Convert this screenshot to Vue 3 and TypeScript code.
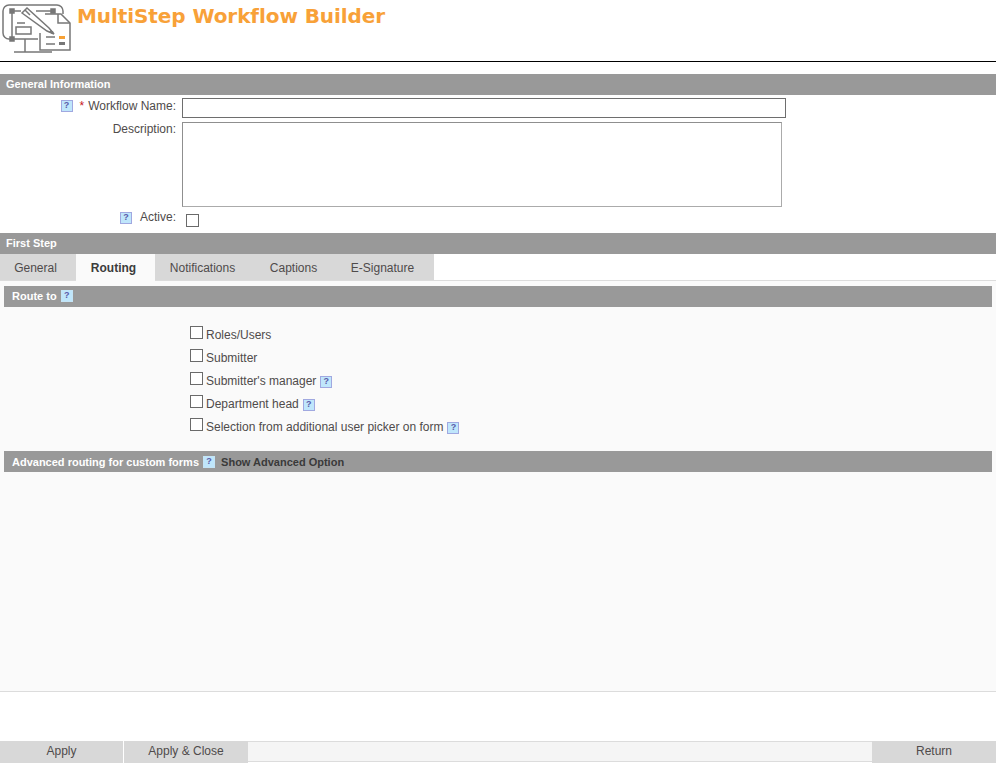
<script setup lang="ts">
const tabs = ['General', 'Routing', 'Notifications', 'Captions', 'E-Signature']
const routes = [
  { label: 'Roles/Users', help: false },
  { label: 'Submitter', help: false },
  { label: "Submitter's manager", help: true },
  { label: 'Department head', help: true },
  { label: 'Selection from additional user picker on form', help: true },
]
</script>

<template>
  <div class="page">
    <header class="header">
      <svg class="logo" width="72" height="56" viewBox="0 0 72 56" fill="none" stroke="#777" stroke-width="1.5">
        <path d="M38 39H9a6 6 0 0 1-6-6V11a6 6 0 0 1 6-6h48a6 6 0 0 1 6 6v3" />
        <path d="M25 39v13M14 52h38" />
        <path d="M12 11h9M36 11h18M12 11v28" />
        <rect x="10" y="9" width="4" height="4" fill="#777" />
        <rect x="10" y="37" width="4" height="4" fill="#777" />
        <rect x="51" y="9" width="4" height="4" fill="#777" />
        <path d="M17 23h8M16 27h15v7H16z" />
        <path d="M40 33v17h30V23l-9-9H45" />
        <path d="M58 14v9h12" />
        <path d="M22 13l5-5 22 20 5 6-7-3z" fill="#fff" />
        <path d="M25 10l5 5" />
        <path d="M50 31l3 2" stroke-width="2.4" />
        <path d="M46 37h9M46 44h9" />
        <rect x="59" y="36" width="6" height="3" fill="#f7a135" stroke="none" />
        <rect x="59" y="42" width="6" height="3" fill="#777" stroke="none" />
      </svg>
      <h1 class="title">MultiStep Workflow Builder</h1>
    </header>

    <section class="bar general-bar">General Information</section>

    <div class="form-grid">
      <div class="label">
        <span class="help"></span><span class="req">*</span>Workflow Name:
      </div>
      <div class="field"><input class="name" type="text" /></div>
      <div class="label">Description:</div>
      <div class="field"><textarea class="desc"></textarea></div>
      <div class="label active-label"><span class="help"></span>Active:</div>
      <div class="field"><span class="box active-box"></span></div>
    </div>

    <section class="bar">First Step</section>

    <nav class="tabs">
      <div
        v-for="t in tabs"
        :key="t"
        class="tab"
        :class="{ current: t === 'Routing' }"
      >{{ t }}</div>
    </nav>

    <main class="content">
      <div class="bar sub">Route to <span class="help inbar"></span></div>
      <ul class="routes">
        <li v-for="r in routes" :key="r.label" class="route">
          <span class="box"></span>
          <span class="route-label">{{ r.label }}</span>
          <span v-if="r.help" class="help"></span>
        </li>
      </ul>
      <div class="bar sub adv">
        Advanced routing for custom forms <span class="help inbar"></span>
        <a class="advanced">Show Advanced Option</a>
      </div>
    </main>

    <footer class="footer">
      <button class="btn apply">Apply</button>
      <button class="btn close">Apply &amp; Close</button>
      <div class="spacer"></div>
      <button class="btn ret">Return</button>
    </footer>
  </div>
</template>

<style>
html, body { margin: 0; background: #fff; }
</style>

<style scoped>
.page {
  width: 996px;
  height: 763px;
  display: flex;
  flex-direction: column;
  font-family: "Liberation Sans", Arial, sans-serif;
  font-size: 12px;
  color: #4f4b4b;
  overflow: hidden;
}
.header {
  height: 61px;
  border-bottom: 1px solid #000;
  display: flex;
  align-items: flex-start;
  gap: 5px;
  flex: none;
}
.logo { margin-top: 0; flex: none; }
.title {
  margin: 4px 0 0;
  font-family: "DejaVu Sans", Verdana, sans-serif;
  font-size: 20px;
  line-height: 24px;
  font-weight: 700;
  color: #f8a138;
  letter-spacing: -0.08px;
}
.bar {
  height: 21px;
  line-height: 21px;
  background: #999;
  color: #fff;
  font-size: 11px;
  font-weight: 700;
  padding-left: 6px;
  flex: none;
}
.general-bar { margin-top: 12px; }
.form-grid {
  display: grid;
  grid-template-columns: 176px 1fr;
  column-gap: 6px;
  padding-top: 3px;
  height: 138px;
  box-sizing: border-box;
  grid-template-rows: 24px 88px 23px;
  flex: none;
}
.label {
  text-align: right;
  line-height: 16px;
  white-space: nowrap;
}
.label:nth-child(3) { margin-top: -1px; }
.active-label { margin-top: -1px; }
.req { color: #c8141e; margin: 0 4px 0 7px; font-weight: 400; }
.active-label .help { margin-right: 8px; vertical-align: -3px; }
.field { display: flex; align-items: flex-start; }
.name {
  width: 604px;
  height: 20px;
  box-sizing: border-box;
  border: 1px solid #6e6e6e;
  background: #fff;
  margin: 0;
  padding: 0;
}
.desc {
  width: 600px;
  height: 85px;
  box-sizing: border-box;
  border: 1px solid #ababab;
  border-top-color: #8f8f8f;
  border-left-color: #8f8f8f;
  margin: 0;
  padding: 0;
  resize: none;
  display: block;
  background: #fff;
}
.box {
  display: inline-block;
  width: 13px;
  height: 13px;
  box-sizing: border-box;
  border: 1px solid #6a6a6a;
  background: #fff;
  flex: none;
}
.active-box { margin: 4px 0 0 4px; }
.help {
  display: inline-block;
  width: 12px;
  height: 12px;
  box-sizing: border-box;
  border: 1px solid #a0a8e0;
  background: #bfe6fb;
  vertical-align: -2px;
  position: relative;
  flex: none;
}
.help::after {
  content: "?";
  position: absolute;
  left: 0;
  right: 0;
  top: -1px;
  text-align: center;
  font-size: 9px;
  line-height: 11px;
  font-weight: 700;
  color: #5a5aa8;
  font-family: "Liberation Sans", Arial, sans-serif;
}
.help.inbar { border-color: #c4e4f6; vertical-align: -2px; margin-left: 1px; }
.tabs {
  display: flex;
  height: 27px;
  box-sizing: border-box;
  border-bottom: 1px solid #dcdcdc;
  flex: none;
}
.tab {
  height: 26px;
  line-height: 28px;
  background: #d8d8d8;
  text-align: center;
  flex: none;
  box-sizing: border-box;
}
.tab:nth-child(1) { width: 76px; padding-right: 5px; }
.tab:nth-child(2) { width: 79px; padding-right: 4px; }
.tab:nth-child(3) { width: 95px; }
.tab:nth-child(4) { width: 78px; padding-left: 9px; }
.tab:nth-child(5) { width: 106px; padding-left: 3px; }
.tab.current {
  background: #fafafa;
  height: 27px;
  font-weight: 700;
  color: #3c3c3c;
  position: relative;
}
.content {
  height: 410px;
  box-sizing: border-box;
  background: #fafafa;
  padding: 5px 4px 0;
  flex: none;
}
.sub { padding-left: 8px; }
.adv { line-height: 23px; }
.routes {
  list-style: none;
  margin: 0;
  padding: 16px 0 0 186px;
  height: 144px;
  box-sizing: border-box;
}
.route {
  display: flex;
  align-items: flex-start;
  height: 23px;
  white-space: nowrap;
}
.route .box { margin: 3px 3px 0 0; }
.route-label { line-height: 16px; margin-top: 4px; margin-right: 4px; }
.route .help { margin-top: 7px; }
.advanced {
  color: #3a3a3a;
  margin-left: 6px;
}
.footer {
  border-top: 1px solid #dcdcdc;
  height: 72px;
  box-sizing: border-box;
  display: flex;
  align-items: flex-end;
  flex: none;
}
.btn {
  height: 22px;
  border: 0;
  background: #d8d8d8;
  color: #4f4b4b;
  font: 12px "Liberation Sans", Arial, sans-serif;
  padding: 0 0 2px;
  margin: 0;
  flex: none;
}
.apply { width: 123px; margin-right: 1px; }
.close { width: 124px; }
.spacer {
  flex: 1;
  height: 21px;
  box-sizing: border-box;
  background: #f5f5f5;
  border-top: 1px solid #dcdcdc;
  border-bottom: 1px solid #dcdcdc;
  margin-bottom: 1px;
}
.ret { width: 124px; }
</style>
